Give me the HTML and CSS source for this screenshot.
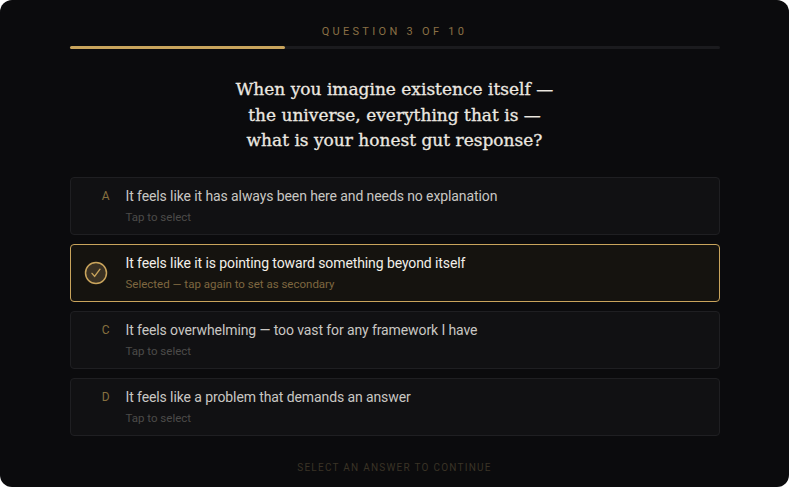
FILE: index.html
```html
<!DOCTYPE html>
<html lang="en">
<head>
  <meta charset="UTF-8">
  <meta name="viewport" content="width=device-width, initial-scale=1.0">
  <title>Question 3 of 10</title>
  <link rel="stylesheet" href="styles.css">
</head>
<body>
  <div class="panel">
    <div class="quiz">
      <div class="step-label">Question 3 of 10</div>
      <div class="progress"><div class="progress-fill" style="width: 33.2%"></div></div>

      <h1 class="question">When you imagine existence itself —<br>the universe, everything that is —<br>what is your honest gut response?</h1>

      <div class="options">
        <div class="option">
          <span class="option-key">A</span>
          <div class="option-body">
            <div class="option-text">It feels like it has always been here and needs no explanation</div>
            <div class="option-hint">Tap to select</div>
          </div>
        </div>

        <div class="option selected">
          <span class="option-key">
            <svg class="check" width="24" height="24" viewBox="0 0 24 24">
              <circle cx="12" cy="12" r="10.5" fill="#3a3123" stroke="#c9a45c" stroke-width="1.5"/>
              <path d="M8 12.4l2.6 3L16 8.2" fill="none" stroke="#c9a45c" stroke-width="1.4" stroke-linecap="round" stroke-linejoin="round"/>
            </svg>
          </span>
          <div class="option-body">
            <div class="option-text">It feels like it is pointing toward something beyond itself</div>
            <div class="option-hint">Selected — tap again to set as secondary</div>
          </div>
        </div>

        <div class="option">
          <span class="option-key">C</span>
          <div class="option-body">
            <div class="option-text">It feels overwhelming — too vast for any framework I have</div>
            <div class="option-hint">Tap to select</div>
          </div>
        </div>

        <div class="option">
          <span class="option-key">D</span>
          <div class="option-body">
            <div class="option-text">It feels like a problem that demands an answer</div>
            <div class="option-hint">Tap to select</div>
          </div>
        </div>
      </div>

      <div class="continue">Select an answer to continue</div>
    </div>
  </div>
</body>
</html>
```

FILE: styles.css
```css
body {
  margin: 0;
  background: #ffffff;
  font-family: Roboto, "Open Sans", sans-serif;
}

.panel {
  width: 789px;
  height: 487px;
  background: #0b0b0d;
  border-radius: 12px;
  overflow: hidden;
}

.quiz {
  width: 650px;
  margin: 0 auto;
  padding-top: 25px;
  display: flex;
  flex-direction: column;
}

.step-label {
  text-align: center;
  font-size: 11px;
  letter-spacing: 3.3px;
  text-transform: uppercase;
  color: #8a7045;
  line-height: 14px;
}

.progress {
  margin-top: 7px;
  height: 3px;
  background: #1b1b1e;
  border-radius: 2px;
}

.progress-fill {
  height: 100%;
  background: #c9a45c;
  border-radius: 2px;
}

.question {
  margin: 28px 0 23px;
  text-align: center;
  font-family: "DejaVu Serif", Georgia, serif;
  font-weight: normal;
  font-size: 17px;
  line-height: 25.5px;
  color: #ece8e0;
  -webkit-text-stroke: 0.3px #ece8e0;
}

.options {
  display: flex;
  flex-direction: column;
  gap: 9px;
}

.option {
  display: flex;
  align-items: center;
  height: 58px;
  box-sizing: border-box;
  border: 1px solid #1f1f22;
  border-radius: 4px;
  background: #111113;
}

.option.selected {
  border: 1.5px solid #c9a45c;
  background: #15130f;
}

.option-key {
  width: 55px;
  display: flex;
  justify-content: flex-end;
  padding-right: 16px;
  box-sizing: border-box;
  font-size: 12px;
  color: #86703f;
  align-self: flex-start;
  padding-top: 11px;
}

.option.selected .option-key {
  justify-content: center;
  padding: 0 4px 0 0;
  align-self: center;
}

.option-text {
  font-size: 14px;
  letter-spacing: -0.1px;
  line-height: 18px;
  color: #c9c7c3;
}

.option.selected .option-text {
  color: #f2efe9;
}

.option-hint {
  margin-top: 5px;
  font-size: 11.5px;
  line-height: 14px;
  color: #4c4b49;
}

.option.selected .option-hint {
  color: #7e6740;
}

.continue {
  margin-top: 26px;
  text-align: center;
  font-size: 10px;
  letter-spacing: 1.25px;
  text-transform: uppercase;
  color: #3a3326;
}
```
